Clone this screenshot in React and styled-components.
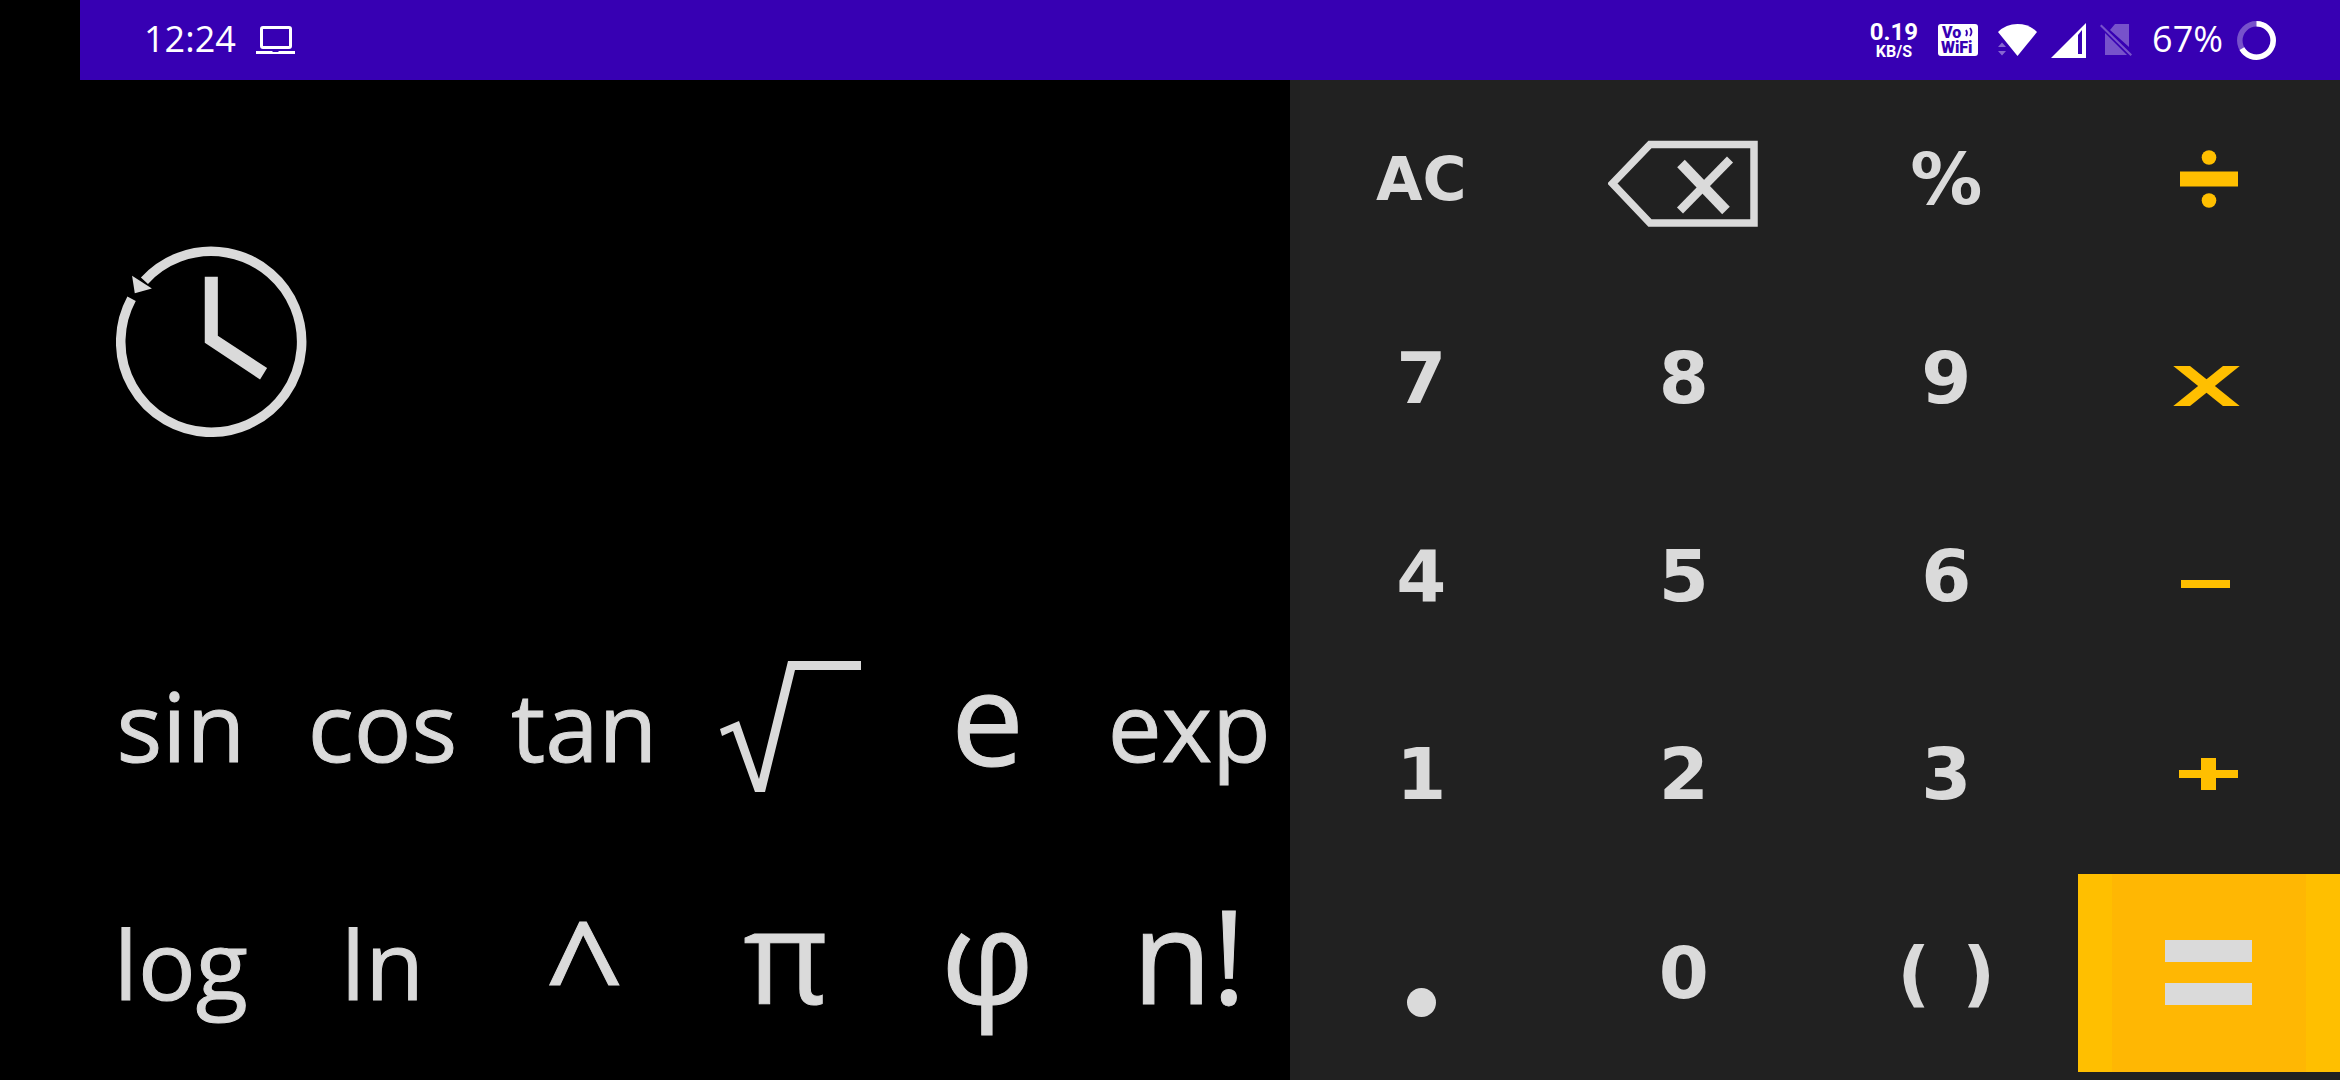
import React from "react";
import styled, { createGlobalStyle } from "styled-components";

const INK = "#dadada";
const AMBER = "#ffbf00";
const PURPLE = "#3700b3";

const GlobalStyle = createGlobalStyle`
  *, *::before, *::after { box-sizing: border-box; }
  html, body, #root { height: 100%; }
  body { margin: 0; background: #000; }
  svg { display: block; flex: none; }
`;

const Screen = styled.div`
  display: flex;
  flex-direction: column;
  min-height: 100%;
  padding-left: 80px;
  background: #000;
`;

const StatusBar = styled.header`
  flex: none;
  display: flex;
  align-items: center;
  justify-content: space-between;
  height: 80px;
  padding: 0 64px 0 64px;
  background: ${PURPLE};
  color: #fff;
`;

const StatusGroup = styled.div`
  display: flex;
  align-items: center;
  gap: ${(p) => p.$gap}px;
`;

const StatusText = styled.span`
  font: 400 36px/38px "Open Sans", "Noto Sans", sans-serif;
  padding-bottom: 2px;
`;

const NetSpeed = styled.div`
  display: flex;
  flex-direction: column;
  align-items: center;
  font-family: Roboto, sans-serif;
  font-weight: 700;
`;

const SpeedValue = styled.span`
  font-size: 24px;
  line-height: 24px;
`;

const SpeedUnit = styled.span`
  font-size: 16px;
  line-height: 16px;
`;

const Calculator = styled.main`
  flex: 1;
  display: grid;
  grid-template-columns: 1210fr 1050fr;
`;

const LeftPanel = styled.section`
  display: grid;
  grid-template-rows: 22fr 10fr 10fr;
`;

const Display = styled.div`
  display: flex;
  align-items: center;
  padding-left: 36px;
`;

const FunctionRow = styled.div`
  display: grid;
  grid-template-columns: repeat(6, minmax(0, 1fr));
`;

const NumberPad = styled.section`
  display: grid;
  grid-template-columns: repeat(4, minmax(0, 1fr));
  grid-template-rows: repeat(5, minmax(0, 1fr));
  padding-bottom: 8px;
  background: #212121;
`;

const Key = styled.button`
  display: flex;
  align-items: center;
  justify-content: center;
  min-width: 0;
  margin: 0;
  padding: 0;
  border: 0;
  background: none;
  color: ${INK};
  white-space: nowrap;
  cursor: pointer;
`;

const functionSizes = {
  word: "font-size: 96px; padding-top: 4px;",
  symbol: "font-size: 130px; padding-bottom: 14px;",
  caret: "font-size: 140px; padding-top: 14px;",
  icon: "",
};

const FunctionKey = styled(Key)`
  font-family: "Open Sans", "Noto Sans", sans-serif;
  font-weight: 400;
  line-height: 160px;
  -webkit-text-stroke: 1px ${INK};
  ${(p) => functionSizes[p.$kind]}
`;

const PadKey = styled(Key)`
  font-family: "DejaVu Sans", sans-serif;
  font-weight: 700;
  font-size: ${(p) => (p.$small ? 60 : 72)}px;
  line-height: 80px;
  gap: 32px;
  color: ${(p) => (p.$operator ? AMBER : INK)};
`;

const EqualsKey = styled(PadKey)`
  background: linear-gradient(to right, ${AMBER} 13%, #ffb703 13% 87%, ${AMBER} 87%);
`;

const Laptop = () => (
  <svg width="39" height="29" viewBox="0 0 39 29" fill="none" aria-hidden="true">
    <rect x="5.5" y="1.5" width="29" height="20" rx="1.5" stroke="#fff" strokeWidth="3" />
    <path d="M0 25h16l1 1h5l1-1h16v3H0z" fill="#fff" />
  </svg>
);

const VoWifi = () => (
  <svg width="40" height="32" viewBox="0 0 40 32" role="img" aria-label="VoWiFi">
    <rect width="40" height="32" rx="3" fill="#fff" />
    <g fill={PURPLE} fontFamily="Roboto, sans-serif" fontWeight="900" fontSize="16">
      <text x="4" y="14">Vo</text>
      <text x="3" y="29">WiFi</text>
    </g>
    <path d="M28 6q2 3 0 6M32 4q3 4 0 8" fill="none" stroke={PURPLE} strokeWidth="1.8" />
  </svg>
);

const Wifi = () => (
  <svg width="39" height="32" viewBox="0 0 39 32" fill="#fff" aria-hidden="true">
    <path d="M0 8Q8 0 19.500 0T39 8L19.500 32z" />
    <path d="M0 23h8L4 18.500zM0 27h8L4 31.500z" opacity=".4" />
  </svg>
);

const Signal = () => (
  <svg width="35" height="35" viewBox="0 0 35 35" aria-hidden="true">
    <path d="M35 0v35H0z" fill="#fff" />
    <path d="M27 12l4-5v24h-4z" fill={PURPLE} />
  </svg>
);

const NoSim = () => (
  <svg width="32" height="32" viewBox="0 0 32 32" aria-hidden="true">
    <g fill="#fff" opacity=".32">
      <path d="M10 6L15 0H29V23z" />
      <path d="M5 9L27 31H5z" />
      <path d="M0 2l1.500-1.500L32 30.500L30.500 32z" />
    </g>
  </svg>
);

const Battery = () => (
  <svg width="39" height="39" viewBox="-19.5 -19.5 39 39" fill="none" strokeWidth="5.500" aria-hidden="true">
    <circle r="16.7" stroke="#fff" opacity=".32" />
    <path d="M0-16.700A16.700 16.700 0 1 1-14.600 8.100" stroke="#fff" />
  </svg>
);

const History = () => (
  <svg width="191" height="191" viewBox="-95 -95 190 190" aria-hidden="true">
    <path d="M-66.700-60.500A90 90 0 1 1-79.500-42.500" fill="none" stroke={INK} strokeWidth="9.500" />
    <path d="M-79-65.300L-59.300-52.700L-76.300-48z" fill={INK} />
    <path d="M-6.700-64.300H6.300V-5.700L55.300 26.300L48.300 37.700L-6.700 1.300z" fill={INK} />
  </svg>
);

const Root = () => (
  <svg width="150" height="140" viewBox="0 0 150 140" fill={INK} aria-hidden="true">
    <path d="M9 76L28 68L48 126L77 8H150V17H84L54 139H44L22 78L11 83z" />
  </svg>
);

const Backspace = () => (
  <svg width="152" height="96" viewBox="0 0 152 96" aria-hidden="true">
    <path d="M42 13.500H146V92H42L4.500 52.500z" fill="none" stroke={INK} strokeWidth="7.500" />
    <path d="M73 32.500L118 79.500" stroke={INK} strokeWidth="10.500" />
    <path d="M72 79.500L122 28.500" stroke={INK} strokeWidth="8.500" />
  </svg>
);

const Divide = () => (
  <svg width="58" height="58" viewBox="0 0 58 58" fill={AMBER} aria-hidden="true">
    <circle cx="29" cy="7.500" r="7.300" />
    <rect y="21.500" width="58" height="15" />
    <circle cx="29" cy="50.500" r="7.300" />
  </svg>
);

const Multiply = () => (
  <svg width="72" height="56" viewBox="0 0 72 56" stroke={AMBER} strokeWidth="10.500" aria-hidden="true">
    <svg y="16" width="67" height="40" viewBox="0 0 67 40">
      <line x1="-1.300" y1="-8" x2="68.300" y2="48" />
      <line x1="68.300" y1="-8" x2="-1.300" y2="48" />
    </svg>
  </svg>
);

const Minus = () => (
  <svg width="56" height="24" viewBox="0 0 56 24" fill={AMBER} aria-hidden="true">
    <rect y="16" width="49" height="8" />
  </svg>
);

const Plus = () => (
  <svg width="59" height="32" viewBox="0 0 59 32" fill={AMBER} aria-hidden="true">
    <rect y="12" width="59" height="8" />
    <rect x="22" width="15" height="32" />
  </svg>
);

const Equals = () => (
  <svg width="87" height="65" viewBox="0 0 87 65" fill={INK} aria-hidden="true">
    <rect width="87" height="22" />
    <rect y="43" width="87" height="22" />
  </svg>
);

const Point = () => (
  <svg width="29" height="88" viewBox="0 0 29 88" fill={INK} aria-hidden="true">
    <circle cx="14.500" cy="73.500" r="14.500" />
  </svg>
);

const functionRows = [
  [
    { kind: "word", face: "sin" },
    { kind: "word", face: "cos" },
    { kind: "word", face: "tan" },
    { kind: "icon", face: <Root />, label: "square root" },
    { kind: "symbol", face: "e" },
    { kind: "word", face: "exp" },
  ],
  [
    { kind: "word", face: "log" },
    { kind: "word", face: "ln" },
    { kind: "caret", face: "^" },
    { kind: "symbol", face: "π" },
    { kind: "symbol", face: "φ" },
    { kind: "symbol", face: "n!" },
  ],
];

const padKeys = [
  { face: "AC", small: true },
  { face: <Backspace />, label: "backspace" },
  { face: "%" },
  { face: <Divide />, label: "divide", operator: true },
  { face: "7" },
  { face: "8" },
  { face: "9" },
  { face: <Multiply />, label: "multiply", operator: true },
  { face: "4" },
  { face: "5" },
  { face: "6" },
  { face: <Minus />, label: "subtract", operator: true },
  { face: "1" },
  { face: "2" },
  { face: "3" },
  { face: <Plus />, label: "add", operator: true },
  { face: <Point />, label: "decimal point" },
  { face: "0" },
  { face: <><span>(</span><span>)</span></>, label: "( )" },
];

export default function App() {
  return (
    <>
      <GlobalStyle />
      <Screen>
        <StatusBar>
          <StatusGroup $gap={20}>
            <StatusText>12:24</StatusText>
            <Laptop />
          </StatusGroup>
          <StatusGroup $gap={14}>
            <StatusGroup $gap={20}>
              <NetSpeed>
                <SpeedValue>0.19</SpeedValue>
                <SpeedUnit>KB/S</SpeedUnit>
              </NetSpeed>
              <VoWifi />
              <Wifi />
            </StatusGroup>
            <Signal />
            <StatusGroup $gap={20}>
              <NoSim />
              <StatusText>67%</StatusText>
            </StatusGroup>
            <Battery />
          </StatusGroup>
        </StatusBar>
        <Calculator>
          <LeftPanel>
            <Display>
              <Key type="button" aria-label="history">
                <History />
              </Key>
            </Display>
            {functionRows.map((row, i) => (
              <FunctionRow key={i}>
                {row.map(({ kind, face, label }, j) => (
                  <FunctionKey key={j} type="button" $kind={kind} aria-label={label}>
                    {face}
                  </FunctionKey>
                ))}
              </FunctionRow>
            ))}
          </LeftPanel>
          <NumberPad>
            {padKeys.map(({ face, label, small, operator }, i) => (
              <PadKey key={i} type="button" $small={small} $operator={operator} aria-label={label}>
                {face}
              </PadKey>
            ))}
            <EqualsKey type="button" aria-label="equals">
              <Equals />
            </EqualsKey>
          </NumberPad>
        </Calculator>
      </Screen>
    </>
  );
}
